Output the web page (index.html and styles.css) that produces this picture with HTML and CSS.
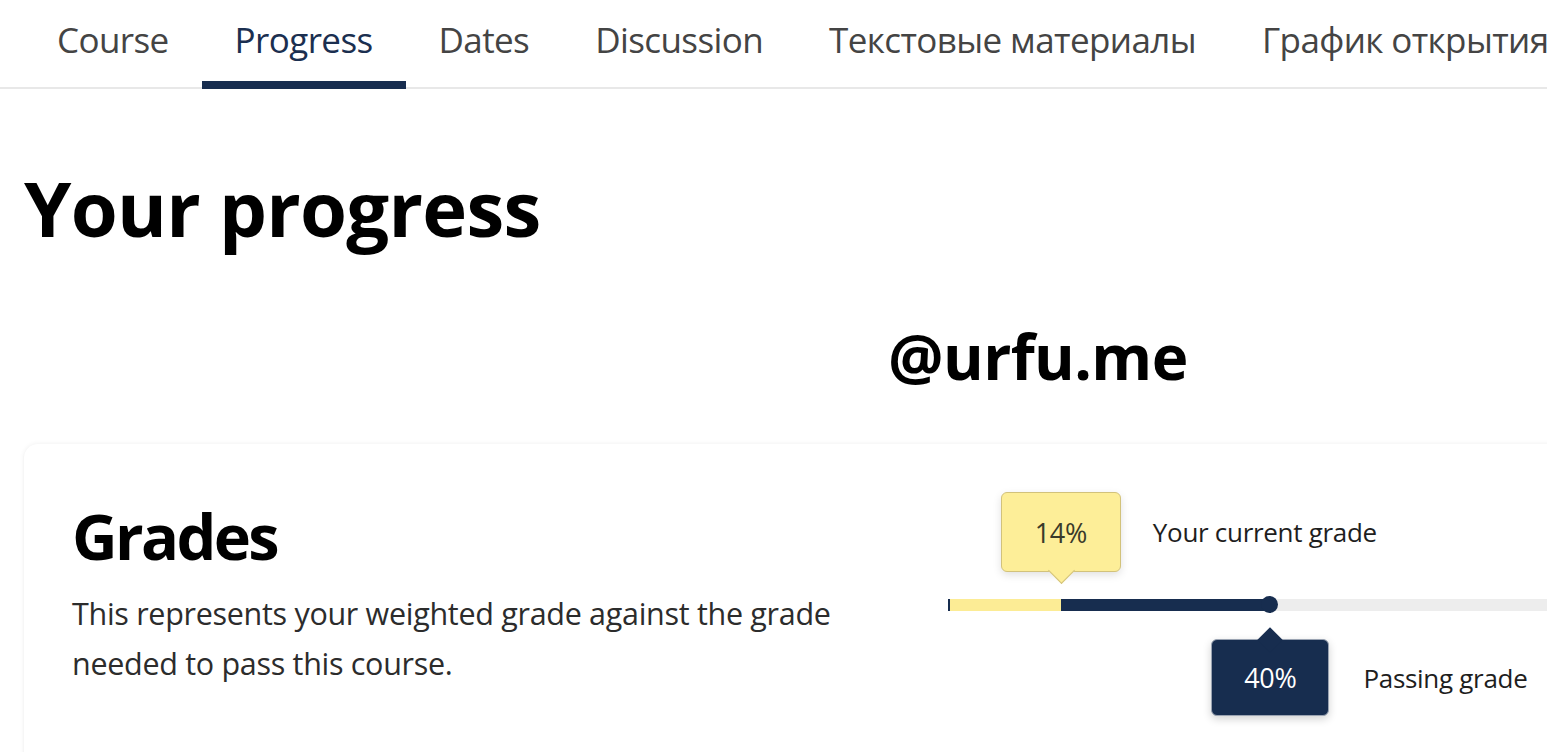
FILE: index.html
```html
<!DOCTYPE html>
<html lang="en">
<head>
<meta charset="utf-8">
<title>Progress</title>
<link rel="stylesheet" href="styles.css">
</head>
<body>
<nav class="tabs">
  <a class="tab">Course</a>
  <a class="tab active">Progress</a>
  <a class="tab">Dates</a>
  <a class="tab">Discussion</a>
  <a class="tab">Текстовые материалы</a>
  <a class="tab">График открытия</a>
</nav>
<main class="page">
  <h1 class="title">Your progress</h1>
  <div class="user-row">
    <span class="username">@urfu.me</span>
  </div>
  <section class="card">
    <div class="card-text">
      <h2 class="card-title">Grades</h2>
      <p class="card-desc">This represents your weighted grade against the grade needed to pass this course.</p>
    </div>
    <div class="chart">
      <div class="bar">
        <div class="bar-pass" style="width: 40%"></div>
        <div class="bar-current" style="width: 14%"></div>
        <div class="bar-tick"></div>
        <div class="bar-dot" style="left: 40%"></div>
        <div class="tip tip-current" style="left: 14%">
          <div class="tip-box">14%</div>
          <span class="tip-label">Your current grade</span>
        </div>
        <div class="tip tip-pass" style="left: 40%">
          <div class="tip-box">40%</div>
          <span class="tip-label">Passing grade</span>
        </div>
      </div>
    </div>
  </section>
</main>
</body>
</html>
```

FILE: styles.css
```css
* { box-sizing: border-box; }
html, body {
  margin: 0;
  padding: 0;
  background: #fff;
  overflow: hidden;
  width: 1547px;
  height: 752px;
}
body {
  font-family: "Open Sans", "Noto Sans", sans-serif;
  color: #2b2b2b;
}
.tabs {
  display: flex;
  flex-wrap: nowrap;
  white-space: nowrap;
  padding-left: 24px;
  height: 89px;
  border-bottom: 2px solid #e8e8e8;
}
.tab {
  display: block;
  padding: 14px 33px 0;
  font-size: 35px;
  line-height: 52px;
  color: #444;
  letter-spacing: -0.6px;
  height: 89px;
  flex: none;
}
.tab.active {
  color: #1b2f50;
  border-bottom: 8px solid #172d4f;
}
.page {
  padding: 0 24px;
}
.title {
  margin: 0;
  padding-top: 60px;
  font-size: 76px;
  line-height: 118px;
  font-weight: 700;
  color: #000;
  letter-spacing: -0.75px;
}
.user-row {
  padding-left: 864px;
  padding-top: 54px;
  height: 177px;
}
.username {
  font-size: 62px;
  font-weight: 700;
  color: #000;
  line-height: 70px;
  letter-spacing: -0.6px;
}
.card {
  display: flex;
  width: 2000px;
  height: 400px;
  border-radius: 14px;
  box-shadow: 0 0 5px rgba(0,0,0,0.07), 0 1px 2px rgba(0,0,0,0.04);
  background: #fff;
}
.card-text {
  width: 924px;
  padding: 54px 0 0 48px;
  flex: none;
}
.card-title {
  margin: 0;
  font-size: 63px;
  font-weight: 700;
  color: #000;
  line-height: 76px;
  letter-spacing: -2.6px;
}
.card-desc {
  margin: 14px 0 0;
  width: 800px;
  font-size: 30.5px;
  line-height: 50px;
  color: #2c2c2c;
  letter-spacing: -0.3px;
}
.chart {
  padding-top: 155px;
}
.bar {
  position: relative;
  width: 806px;
  height: 12px;
  background: #ededed;
}
.bar-pass {
  position: absolute;
  left: 0; top: 0; bottom: 0;
  background: #172d4f;
}
.bar-current {
  position: absolute;
  left: 0; top: 0; bottom: 0;
  background: #fcec95;
}
.bar-tick {
  position: absolute;
  left: 0; top: 0; bottom: 0;
  width: 2px;
  background: #172d4f;
}
.bar-dot {
  position: absolute;
  top: -3px;
  width: 17px;
  height: 17px;
  margin-left: -9px;
  border-radius: 50%;
  background: #172d4f;
}
.tip {
  position: absolute;
  display: flex;
  align-items: center;
}
.tip-box {
  position: relative;
  flex: none;
  display: flex;
  align-items: center;
  justify-content: center;
  border-radius: 6px;
  font-size: 27px;
  letter-spacing: -0.3px;
}
.tip-box::after {
  content: "";
  position: absolute;
  left: 50%;
  width: 18px;
  height: 18px;
  margin-left: -9px;
  transform: rotate(45deg);
}
.tip-current {
  bottom: 39px;
  margin-left: -60px;
}
.tip-current .tip-box {
  width: 120px;
  height: 80px;
  background: #fdee98;
  border: 1.5px solid #d2c27b;
  color: #3a3a2a;
  box-shadow: 0 3px 8px rgba(0,0,0,0.12);
}
.tip-current .tip-box::after {
  bottom: -9px;
  background: #fdee98;
  border-right: 1.5px solid #d2c27b;
  border-bottom: 1.5px solid #d2c27b;
}
.tip-pass {
  top: 40px;
  margin-left: -59px;
}
.tip-pass .tip-box {
  width: 118px;
  height: 77px;
  background: #172d4f;
  color: #fff;
  border: 1.5px solid #9aa3b2;
  box-shadow: 0 3px 8px rgba(0,0,0,0.18);
}
.tip-pass .tip-box::after {
  top: -9px;
  background: #172d4f;
}
.tip-label {
  white-space: nowrap;
  font-size: 26px;
  color: #1e1e1e;
  letter-spacing: -0.3px;
}
.tip-current .tip-label { margin-left: 32px; }
.tip-pass .tip-label { margin-left: 34px; }
```
